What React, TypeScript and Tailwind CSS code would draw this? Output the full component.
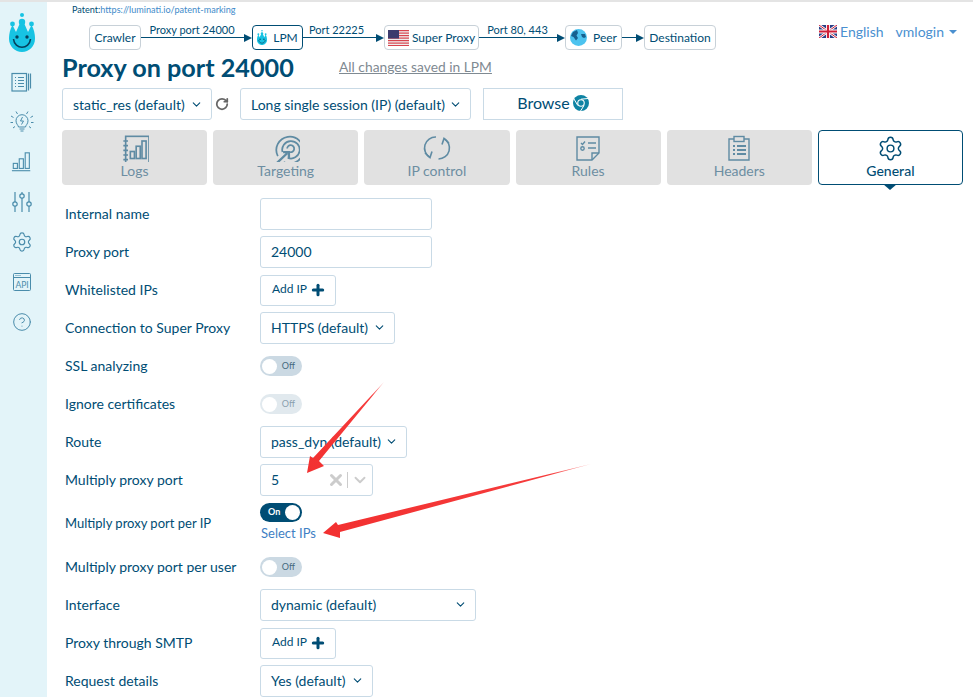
import React from "react";
import { ChevronDown, RotateCw, Plus, X, Settings, CircleHelp } from "lucide-react";

const S = ({ size = 24, children, className = "" }: { size?: number; children: React.ReactNode; className?: string }) => (
  <svg width={size} height={size} viewBox="0 0 24 24" fill="none" stroke="currentColor" strokeWidth="1.2" className={className}>
    {children}
  </svg>
);

const Logo = ({ size = 26 }: { size?: number }) => (
  <svg width={size} height={size * 1.5} viewBox="0 0 26 39" fill="#17c3e3">
    <circle cx="13" cy="2" r="2" />
    <circle cx="3.5" cy="11" r="2.4" />
    <circle cx="13" cy="9" r="3.2" />
    <circle cx="22.5" cy="11" r="2.4" />
    <path d="M2 15 L3.5 12 L7 19 L11 10 L15 10 L19 19 L22.5 12 L24 15 C26 20 26 24 26 26 C26 33 20 39 13 39 C6 39 0 33 0 26 C0 24 0 20 2 15Z" />
    <circle cx="8" cy="24" r="1.7" fill="#06405c" />
    <circle cx="18" cy="24" r="1.7" fill="#06405c" />
    <path d="M4.5 26 C5.5 37 20.5 37 21.5 26" fill="none" stroke="#06405c" strokeWidth="1.6" />
  </svg>
);

const Doc = () => (
  <S size={24}>
    <rect x="2" y="3.5" width="14.5" height="17.5" />
    <path d="M5 7.5h1M8 7.5h6M5 10.5h1M8 10.5h6M5 13.5h1M8 13.5h6M5 16.5h1M8 16.5h6M18.5 3.5v17M20.5 3.5v15" />
  </S>
);
const Bulb = () => (
  <S size={24}>
    <path d="M8.5 17c-.3-2-2.5-3-2.5-6.3a6 6 0 0 1 12 0c0 3.3-2.2 4.300-2.500 6.300z" strokeWidth="1" />
    <path d="M12.500 7l-2 4h3l-2 3.500M9.500 19h5M10.500 21h3M1 6l2.500 1.500M23 6l-2.500 1.500M.5 12.500h2.500M21 12.500h2.500M3 18l2-1.500M21 18l-2-1.500M6 1.500l1.500 2.500M18 1.500l-1.500 2.500" strokeWidth="1" />
  </S>
);
const Bars = () => (
  <S size={22}>
    <path d="M1 21.500h20" />
    <rect x="2.500" y="13.500" width="4.500" height="5.500" />
    <rect x="9" y="8.500" width="4.500" height="10.500" />
    <rect x="15.500" y="2" width="4.500" height="17" />
  </S>
);
const Sliders = () => (
  <S size={24}>
    <path d="M5 2v10M5 16v6M12 2v2M12 8v14M19 2v10M19 16v6" />
    <circle cx="5" cy="14" r="2.200" />
    <circle cx="12" cy="6" r="2.200" />
    <circle cx="19" cy="14" r="2.200" />
  </S>
);
const Api = () => (
  <svg width="20" height="20" viewBox="0 0 20 20" fill="none" stroke="currentColor" strokeWidth="1">
    <rect x="1.500" y="1.500" width="17" height="17" rx="1" />
    <path d="M1.500 5.500h17M3.500 3.500h1M5.500 3.500h1M7.500 3.500h1" />
    <text x="10" y="15.500" textAnchor="middle" fontSize="8.500" fill="currentColor" stroke="none" fontFamily="Lato, sans-serif">API</text>
  </svg>
);

const LogsIcon = () => (
  <S size={28}>
    <rect x="4" y="2" width="20" height="23" strokeWidth="1.400" />
    <path d="M2 6h4M2 10h4M2 14h4M2 18h4M2 22h4" strokeWidth="1.400" />
    <rect x="8" y="15" width="3.500" height="6" strokeWidth="1.400" />
    <rect x="13" y="10.500" width="3.500" height="10.500" strokeWidth="1.400" />
    <rect x="18" y="6" width="3.500" height="15" strokeWidth="1.400" />
  </S>
);
const TargetIcon = () => (
  <S size={28}>
    <path d="M5 19A11.500 11.500 0 1 1 10 24" strokeWidth="1.500" />
    <path d="M9 15.500a7.500 7.500 0 1 1 4.500 5" strokeWidth="1.500" />
    <path d="M13 12.500a3 3 0 1 1 2.500 3" strokeWidth="1.500" />
    <path d="M3 26l10-9.500M9.500 15.500h5v5" strokeWidth="2" />
  </S>
);
const CycleIcon = () => (
  <svg width="28" height="28" viewBox="0 0 28 28" fill="none" stroke="currentColor" strokeWidth="1.600">
    <path d="M7 23.500A11 11 0 0 1 13 3" />
    <path d="M21 4.500A11 11 0 0 1 15.500 25" />
    <path d="M2 19l5 4.500 2-6M26 9l-5-4.500-2 6" />
  </svg>
);
const RulesIcon = () => (
  <svg width="26" height="26" viewBox="0 0 26 26" fill="none" stroke="currentColor" strokeWidth="1.400">
    <path d="M2 2h22v16l-7 7H2z" />
    <path d="M24 18h-7v7" />
    <path d="M6 8l1.500 1.500L10 6.500M13 8h8M13 13h8" />
    <circle cx="7.500" cy="13.500" r="1.700" />
  </svg>
);
const HeadersIcon = () => (
  <svg width="26" height="26" viewBox="0 0 26 26" fill="none" stroke="currentColor" strokeWidth="1.400">
    <path d="M8 4H3v21h20V4h-5" />
    <rect x="8" y="1.500" width="10" height="5" />
    <path d="M7 11h2M11 11h9M7 15h2M11 15h9M7 19h2M11 19h9" strokeWidth="1.800" />
  </svg>
);

const UsFlag = () => (
  <svg width="21" height="16" viewBox="0 0 21 16">
    <rect width="21" height="16" fill="#eee" />
    {[0, 2.500, 5, 7.500, 10, 12.500, 15].map((y) => (
      <rect key={y} y={y} width="21" height="1.200" fill="#d9434e" />
    ))}
    <rect width="11" height="8.500" fill="#3c3b6e" />
  </svg>
);
const UkFlag = () => (
  <svg width="18" height="13" viewBox="0 0 18 13">
    <rect width="18" height="13" fill="#2a3f86" />
    <path d="M0 0L18 13M18 0L0 13" stroke="#fff" strokeWidth="2.600" />
    <path d="M0 0L18 13M18 0L0 13" stroke="#cf2038" strokeWidth="1" />
    <path d="M9 0v13M0 6.500h18" stroke="#fff" strokeWidth="4" />
    <path d="M9 0v13M0 6.500h18" stroke="#cf2038" strokeWidth="2.200" />
  </svg>
);
const Globe = () => (
  <svg width="17" height="17" viewBox="0 0 17 17">
    <circle cx="8.500" cy="8.500" r="8.500" fill="#4cc3ef" />
    <path d="M3 3l4-2 1 3-1.500 2.500L8 9 6 11.500 3.500 8 1 7zM11 5l4 0 1 3-2 1-2-1z" fill="#17618f" />
  </svg>
);
const Chrome = () => (
  <svg width="16" height="16" viewBox="0 0 16 16">
    <circle cx="8" cy="8" r="8" fill="#0e83a3" />
    <circle cx="8" cy="8" r="3.800" fill="#fff" />
    <circle cx="8" cy="8" r="2.700" fill="#0e83a3" />
    <path d="M8 4.200L15 3.500M11 10.500L7.500 16M4.800 10.500L1 4" stroke="#fff" strokeWidth="1" />
  </svg>
);

const Node = ({ children, active, w }: { children: React.ReactNode; active?: boolean; w: string }) => (
  <div
    className={`h-[25px] ${w} shrink-0 rounded-[4px] border flex items-center justify-center gap-[3px] text-[12px] bg-white ${
      active ? "border-[#004d74]" : "border-[#c8d1d8]"
    }`}
  >
    {children}
  </div>
);

const Link = ({ label, w, right = "right-[9px]" }: { label?: string; w: string; right?: string }) => (
  <div className={`${w} shrink-0 relative flex items-center h-[25px]`}>
    {label && (
      <span className={`absolute left-0 ${right} top-[-3px] text-center text-[11px] leading-[15px] whitespace-nowrap`}>
        {label}
      </span>
    )}
    <div className="h-px bg-[#004d74] flex-1" />
    <div className="w-0 h-0 border-y-[4px] border-y-transparent border-l-[8px] border-l-[#004d74]" />
  </div>
);

const Select = ({ label, w, lift }: { label: string; w: string; lift?: boolean }) => (
  <div className={`${w} h-[32px] shrink-0 rounded-[3px] border border-[#c9dae6] flex items-center justify-between pl-[10px] pr-[8px] text-[14px] bg-white ${lift ? "pb-[2px]" : ""}`}>
    <span className="whitespace-nowrap">{label}</span>
    <ChevronDown size={13} strokeWidth={2} className="text-[#004d74]" />
  </div>
);

const Input = ({ value = "" }: { value?: string }) => (
  <div className="w-[172px] h-[32px] rounded-[3px] border border-[#c9dae6] flex items-center px-[10px] pb-[2px] text-[14px]">{value}</div>
);

const AddIp = () => (
  <div className="w-[76px] h-[31px] rounded-[3px] border border-[#c9dae6] flex items-center pl-[11px] pb-[2px] gap-[3px] text-[12px]">
    <span>Add IP</span>
    <Plus size={16} strokeWidth={4.500} className="text-[#004d74] mt-[2px]" />
  </div>
);

const Toggle = ({ on, faded }: { on?: boolean; faded?: boolean }) =>
  on ? (
    <div className="w-[42px] h-[19px] rounded-full bg-[#004d74] flex items-center justify-between pl-[8px] pr-[2px] text-[9px] font-bold text-white">
      <span>On</span>
      <div className="w-[15px] h-[15px] rounded-full bg-white" />
    </div>
  ) : (
    <div className={`w-[42px] h-[20px] rounded-full flex items-center justify-between pl-[1px] pr-[7px] text-[9px] ${faded ? "bg-[#e1e9ee] text-[#8aa0ae]" : "bg-[#cbd9e3] text-[#46697f]"}`}>
      <div className="w-[15px] h-[15px] ml-px rounded-full bg-white" />
      <span>Off</span>
    </div>
  );

const Row = ({ label, children, h = "h-[38px]", small }: { label: string; children: React.ReactNode; h?: string; small?: boolean }) => (
  <div className={`flex items-center ${h}`}>
    <div className={`w-[195px] shrink-0 whitespace-nowrap ${small ? "text-[13px]" : "pb-[2px] text-[14px]"}`}>{label}</div>
    {children}
  </div>
);

const tabs: [string, React.ReactNode][] = [
  ["Logs", <LogsIcon />],
  ["Targeting", <TargetIcon />],
  ["IP control", <CycleIcon />],
  ["Rules", <RulesIcon />],
  ["Headers", <HeadersIcon />],
];

export default function App() {
  return (
    <div className="relative w-[973px] h-[697px] overflow-hidden bg-white text-[#004d74] border-t-2 border-t-[#e4e4e4] flex font-['Lato',sans-serif]">
      <aside className="w-[47px] shrink-0 bg-[#e3f4f9] flex flex-col items-center pr-[3px] text-[#4a8cab]">
        <div className="h-[60px] pt-[11px] flex justify-center">
          <Logo />
        </div>
        <div className="h-10 flex items-center"><Doc /></div>
        <div className="h-10 flex items-center"><Bulb /></div>
        <div className="h-10 flex items-center"><Bars /></div>
        <div className="h-10 flex items-center"><Sliders /></div>
        <div className="h-10 flex items-center"><Settings size={22} strokeWidth={1.300} /></div>
        <div className="h-10 flex items-center"><Api /></div>
        <div className="h-10 flex items-center"><CircleHelp size={20} strokeWidth={1.200} /></div>
      </aside>

      <main className="flex-1 min-w-0 pl-[15px] pr-[10px]">
        <div className="flex justify-between h-[23px]">
          <div className="pl-[10px] pt-[2px] text-[9.1px] leading-[11px]">
            Patent:<span className="text-[#428bca]">https://luminati.io/patent-marking</span>
          </div>
        </div>
        <div className="flex justify-between h-[25px]">
          <div className="flex ml-[27px]">
            <Node w="w-[52px]">Crawler</Node>
            <Link w="w-[111px]" label="Proxy port 24000" />
            <Node w="w-[51px]" active>
              <Logo size={10} /> <span className="ml-[3px]">LPM</span>
            </Node>
            <Link w="w-[81px]" label="Port 22225" right="right-[14px]" />
            <Node w="w-[95px]"><UsFlag /> Super Proxy</Node>
            <Link w="w-[86px]" label="Port 80, 443" />
            <Node w="w-[57px]"><Globe /> <span className="ml-[3px]">Peer</span></Node>
            <Link w="w-[22px]" />
            <Node w="w-[72px]">Destination</Node>
          </div>
          <div className="flex items-center gap-[12px] pr-[6px] pb-[12px] text-[14px] text-[#4a90d0]">
            <div className="flex items-center gap-[3px]"><UkFlag /> English</div>
            <div className="flex items-center gap-[5px]">
              vmlogin
              <div className="w-0 h-0 border-x-[4px] border-x-transparent border-t-[4px] border-t-[#4a90d0]" />
            </div>
          </div>
        </div>
        <div className="flex items-center h-[38px] pb-[3px]">
          <h1 className="text-[25.200px] leading-[35px] font-bold w-[277px] whitespace-nowrap">Proxy on port 24000</h1>
          <span className="text-[13.800px] underline text-[#7f8a92]">All changes saved in LPM</span>
        </div>
        <div className="flex items-center h-[32px]">
          <Select w="w-[150px]" label="static_res (default)" />
          <div className="w-[20px] mr-[8px] flex justify-center">
            <RotateCw size={14} strokeWidth={3} className="text-[#666666]" />
          </div>
          <Select w="w-[231px]" label="Long single session (IP) (default)" />
          <div className="ml-[12px] w-[140px] h-[32px] pb-[2px] border border-[#c9dae6] flex items-center justify-center gap-[3px] text-[16px]">
            Browse <Chrome />
          </div>
        </div>
        <div className="grid grid-cols-6 gap-[6px] mt-[10px] h-[55px]">
          {tabs.map(([name, icon]) => (
            <div key={name} className="rounded-[4px] bg-[#e1e1e1] flex flex-col items-center pt-[4px] text-[#5f8ba3]">
              <div className="h-[28px] flex items-center">{icon}</div>
              <div className="text-[14px] leading-[18px] text-[#6d8ea2]">{name}</div>
            </div>
          ))}
          <div className="relative rounded-[4px] border border-[#004d74] bg-white flex flex-col items-center pt-[3px]">
            <div className="h-[28px] flex items-center"><Settings size={27} strokeWidth={1.300} /></div>
            <div className="text-[14px] leading-[18px] font-medium">General</div>
            <div className="absolute top-full left-1/2 -translate-x-1/2 w-0 h-0 border-x-[7px] border-x-transparent border-t-[6px] border-t-[#004d74]" />
          </div>
        </div>

        <div className="mt-[10px] pl-[3px]">
          <Row label="Internal name"><Input /></Row>
          <Row label="Proxy port"><Input value="24000" /></Row>
          <Row label="Whitelisted IPs"><AddIp /></Row>
          <Row label="Connection to Super Proxy"><Select lift w="w-[135px]" label="HTTPS (default)" /></Row>
          <Row label="SSL analyzing"><Toggle /></Row>
          <Row label="Ignore certificates"><Toggle faded /></Row>
          <Row label="Route"><Select lift w="w-[147px]" label="pass_dyn (default)" /></Row>
          <Row label="Multiply proxy port">
            <div className="w-[113px] h-[32px] rounded-[3px] border border-[#c9dae6] flex items-center pl-[10px] pr-[3px] pb-[2px] text-[14px]">
              <span className="flex-1">5</span>
              <X size={18} strokeWidth={4} className="text-[#cccccc] mt-[2px]" />
              <div className="w-px h-[16px] bg-[#cccccc] ml-[2px] mr-[3px] mt-[2px]" />
              <ChevronDown size={18} strokeWidth={2.500} className="text-[#cccccc] mt-[2px]" />
            </div>
          </Row>
          <Row small label="Multiply proxy port per IP" h="h-[49px]">
            <div className="flex flex-col items-start -mt-[4px]">
              <Toggle on />
              <span className="text-[13px] leading-[16px] mt-[3px] ml-px text-[#3f7fc4]">Select IPs</span>
            </div>
          </Row>
          <Row label="Multiply proxy port per user"><Toggle /></Row>
          <Row label="Interface"><Select lift w="w-[216px]" label="dynamic (default)" /></Row>
          <Row label="Proxy through SMTP"><AddIp /></Row>
          <Row label="Request details"><Select lift w="w-[113px]" label="Yes (default)" /></Row>
        </div>
      </main>

      <svg className="absolute left-0 top-[-2px] pointer-events-none" width="973" height="697" viewBox="0 0 973 697">
        <defs>
          <linearGradient id="a1" x1="384" y1="382" x2="307" y2="473" gradientUnits="userSpaceOnUse">
            <stop offset="0" stopColor="#fb6a6a" stopOpacity="0.6" />
            <stop offset="0.15" stopColor="#f63c3c" />
            <stop offset="1" stopColor="#f23030" />
          </linearGradient>
          <linearGradient id="a2" x1="591" y1="464" x2="323" y2="533" gradientUnits="userSpaceOnUse">
            <stop offset="0" stopColor="#fb6a6a" stopOpacity="0.6" />
            <stop offset="0.15" stopColor="#f63c3c" />
            <stop offset="1" stopColor="#f23030" />
          </linearGradient>
        </defs>
        <polygon points="384,382 319,461 324,466 307,473 310,456 313,458" fill="url(#a1)" />
        <polygon points="591,464 340,532 340,538 323,533 336,522 338,525" fill="url(#a2)" />
      </svg>
    </div>
  );
}
